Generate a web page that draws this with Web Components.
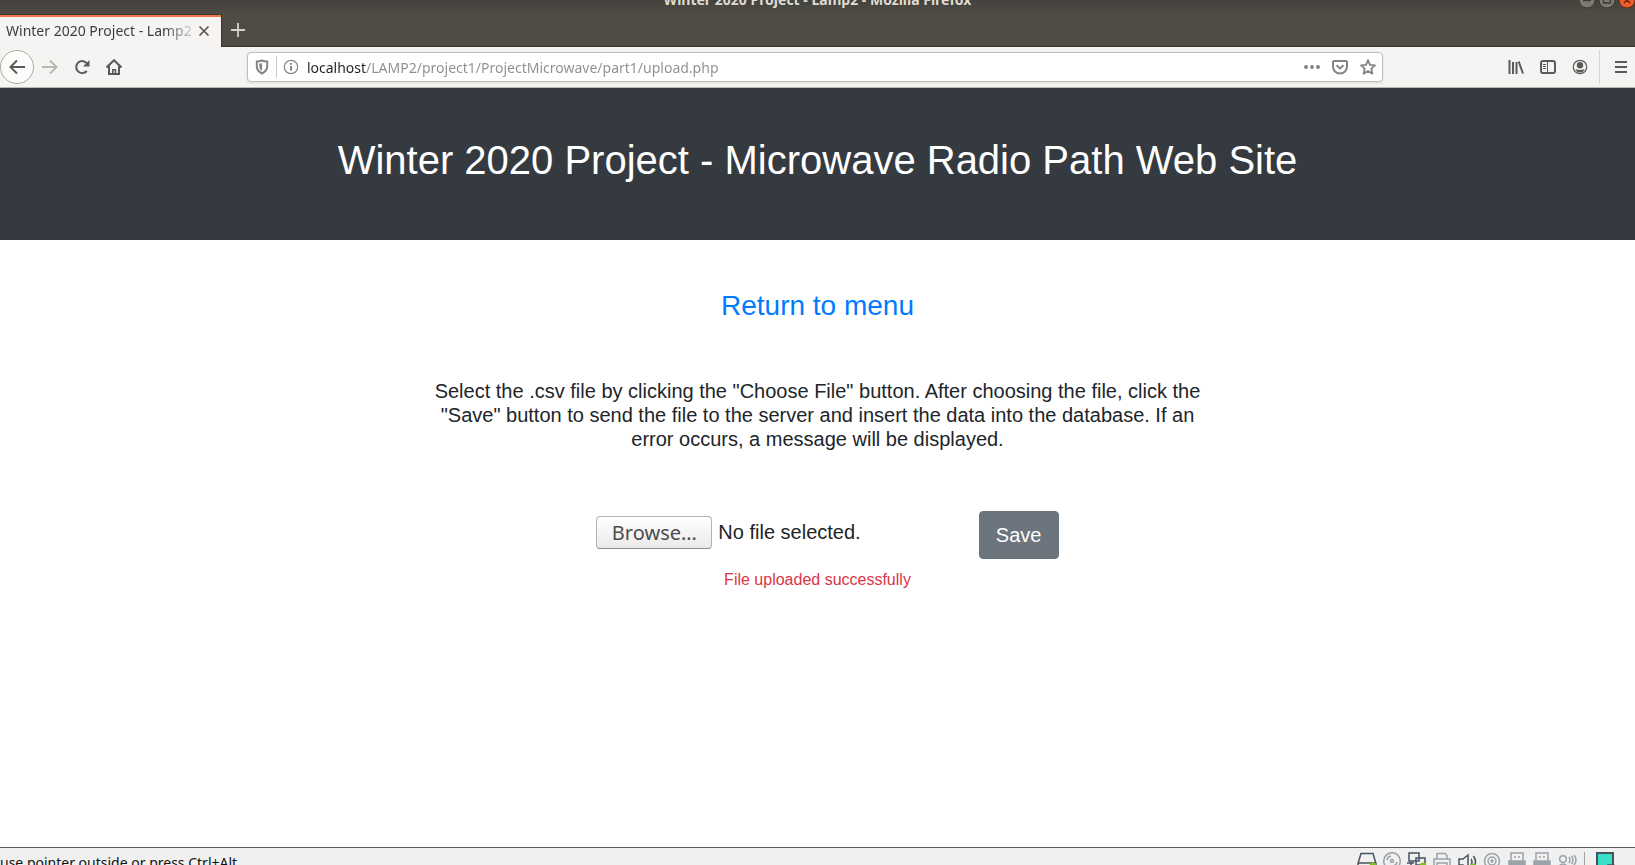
<!DOCTYPE html>
<html lang="en">
<head>
<meta charset="utf-8">
<title>Winter 2020 Project - Lamp2</title>
<style>
  html, body { margin: 0; height: 100%; }
  body {
    overflow: hidden;
    background: #fff;
    font-family: "Liberation Sans", Arial, sans-serif;
    --ui: "Noto Sans", "Open Sans", sans-serif;
  }
</style>
</head>
<body>
<app-shell>
  <window-title slot="chrome">Winter 2020 Project - Lamp2 - Mozilla Firefox</window-title>
  <tab-strip slot="chrome">Winter 2020 Project - Lamp2</tab-strip>
  <nav-toolbar slot="chrome" address="localhost/LAMP2/project1/ProjectMicrowave/part1/upload.php"></nav-toolbar>
  <site-header>Winter 2020 Project - Microwave Radio Path Web Site</site-header>
  <upload-page>
    <span slot="help">Select the .csv file by clicking the "Choose File" button. After choosing the file, click the "Save" button to send the file to the server and insert the data into the database. If an error occurs, a message will be displayed.</span>
    <span slot="message">File uploaded successfully</span>
  </upload-page>
  <vm-status slot="status">use pointer outside or press Ctrl+Alt</vm-status>
</app-shell>

<script>
const define = (name, html) => customElements.define(name, class extends HTMLElement {
  connectedCallback() {
    if (this.shadowRoot) return;
    this.attachShadow({ mode: "open" }).innerHTML = html;
    const address = this.shadowRoot.querySelector("#address");
    if (address) address.value = this.getAttribute("address");
  }
});

define("app-shell", `
<style>
  :host { display: flex; flex-direction: column; height: 100vh; }
  main { flex: 1; min-height: 0; overflow: hidden; background: #fff; }
</style>
<slot name="chrome"></slot>
<main><slot></slot></main>
<slot name="status"></slot>`);

define("window-title", `
<style>
  :host {
    display: grid; grid-template-columns: 1fr auto 1fr; align-items: end; align-content: end;
    height: 14px; flex: none; overflow: hidden;
    background: linear-gradient(#42413c, #504c45);
    color: #dfdbd2; font: bold 14px/20px var(--ui);
  }
  .title { grid-column: 2; white-space: nowrap; padding-bottom: 4px; }
  .controls { display: flex; justify-content: flex-end; gap: 2px; padding-bottom: 5px; margin-right: -1px; }
  button { border: 0; padding: 0; background: none; width: 18px; height: 18px; }
  svg { display: block; }
</style>
<span class="title"><slot></slot></span>
<div class="controls">
  <button aria-label="Minimize"><svg width="18" height="18"><circle cx="9" cy="9" r="8" fill="#7d7a72" stroke="#383630"/><path d="M5 9.500h8" stroke="#3c3a35" stroke-width="1.500"/></svg></button>
  <button aria-label="Maximize"><svg width="18" height="18"><circle cx="9" cy="9" r="8" fill="#7d7a72" stroke="#383630"/><path d="M5.500 6h7v6h-7z" fill="none" stroke="#3c3a35" stroke-width="1.300"/></svg></button>
  <button aria-label="Close window"><svg width="18" height="18"><circle cx="9" cy="9" r="8" fill="#f05a2a" stroke="#5a2a18"/><path d="M6 6l6 6M12 6l-6 6" stroke="#6b2a14" stroke-width="1.500"/></svg></button>
</div>`);

define("tab-strip", `
<style>
  :host { display: flex; flex: none; height: 33px; background: #504c45; box-shadow: inset 0 -1px #383630; }
  .tab {
    display: flex; align-items: center; box-sizing: border-box; width: 222px; height: 33px;
    border-top: 1px solid #383630; border-right: 1px solid #383630;
    background: linear-gradient(#f2784b 2px, #f5f4f2 2px); padding: 0 9px 0 6px; gap: 2px;
    color: #3d3d3d; font: 14px/20px var(--ui);
  }
  .label { flex: 1; overflow: hidden; white-space: nowrap; -webkit-mask-image: linear-gradient(90deg, #000 158px, transparent 192px); mask-image: linear-gradient(90deg, #000 158px, transparent 192px); }
  button { border: 0; padding: 0; background: none; display: grid; place-items: center; }
  .close { width: 16px; height: 20px; }
  .new { width: 32px; height: 32px; }
</style>
<div class="tab"><span class="label"><slot></slot></span>
  <button class="close" aria-label="Close tab"><svg width="12" height="12"><path d="M1.500 1.500l9 9M10.500 1.500l-9 9" stroke="#55524e" stroke-width="1.600"/></svg></button>
</div>
<button class="new" aria-label="New tab"><svg width="16" height="16"><path d="M8 1v14M1 8h14" stroke="#d6d2ca" stroke-width="1.800"/></svg></button>`);

define("nav-toolbar", `
<style>
  :host {
    display: flex; align-items: center; box-sizing: border-box; flex: none; height: 41px;
    background: #f5f4f2; border-bottom: 1px solid #b9b7b2; color: #5b5a58;
  }
  button { display: grid; place-items: center; box-sizing: border-box; width: 32px; height: 32px; padding: 0; border: 0; background: none; color: inherit; flex: none; }
  .back { width: 34px; height: 34px; border: 1px solid #adaba7; border-radius: 50%; background: #fcfcfb; }
  .off { color: #bab8b5; }
  .menu { width: 28px; }
  svg { display: block; fill: none; stroke: currentColor; stroke-width: 2; }
  .space { flex: 10; }
  .bar {
    display: flex; align-items: center; flex: 97; box-sizing: border-box; height: 30px;
    border: 1px solid #c0beba; border-radius: 4px; background: #fff; box-shadow: 0 1px 3px #0000001a; color: #858482;
  }
  .bar button { width: 28px; height: 28px; }
  .rule { width: 1px; height: 22px; background: #cccac6; }
  input {
    flex: 1; min-width: 0; height: 24px; border: 0; padding: 0 0 0 2px; outline: 0; font: 14px/20px var(--ui); color: #8b8b8b;
    background: linear-gradient(90deg, #222 61px, #8f8e8c 61px); -webkit-background-clip: text; background-clip: text;
    -webkit-text-fill-color: transparent;
  }
  .edge { width: 1px; height: 34px; background: #d6d4d0; margin: 0 7px 0 3px; }
</style>
<button class="back" aria-label="Back"><svg width="16" height="16"><path d="M16 8H2M8 1.500L1.500 8L8 14.500"/></svg></button>
<button class="off" aria-label="Forward"><svg width="16" height="16"><path d="M0 8h14M8 1.500L14.500 8L8 14.500"/></svg></button>
<button aria-label="Reload"><svg width="16" height="16"><path d="M12.800 12A6 6 0 1 1 13 4.500"/><path d="M15.500 1v6.500H9z" fill="currentColor" stroke="none"/></svg></button>
<button aria-label="Home"><svg width="16" height="16"><path d="M0.500 8.500L8 1.200L15.500 8.500M3 7v8h10V7"/><path d="M6.800 15v-4.200h2.700V15" stroke-width="1.600"/></svg></button>
<span class="space"></span>
<div class="bar">
  <button aria-label="Tracking protection"><svg width="16" height="16"><path d="M8 1.500C6 2.300 4.300 2.500 2.800 2.600V7c0 3.600 2 6 5.200 7.500C11.200 13 13.200 10.600 13.200 7V2.600C11.700 2.500 10 2.300 8 1.500z" stroke-width="2"/><path d="M8 4.200L5.300 4.800V7.500C5.500 9.500 6.400 11 8 12z" fill="currentColor" stroke="none"/></svg></button>
  <span class="rule"></span>
  <button aria-label="Site information"><svg width="16" height="16"><circle cx="8" cy="8" r="6.700" stroke-width="1.200"/><path d="M8 7v4.500M8 4v1.800"/></svg></button>
  <input id="address" aria-label="Address" spellcheck="false">
  <button aria-label="Page actions"><svg width="16" height="16"><g fill="currentColor" stroke="none"><circle cx="2" cy="8" r="2"/><circle cx="8" cy="8" r="2"/><circle cx="14" cy="8" r="2"/></g></svg></button>
  <button aria-label="Save to Pocket"><svg width="16" height="16"><path d="M2 2h12q1 0 1 1v4.500a7 7 0 0 1-14 0V3q0-1 1-1z"/><path d="M4.500 6.200L8 9.500L11.500 6.200"/></svg></button>
  <button aria-label="Bookmark"><svg width="16" height="16"><path d="M8 1.200L10 5.800L15 6.300L11.300 9.700L12.400 14.700L8 12.100L3.600 14.700L4.700 9.700L1 6.300L6 5.800z" stroke-width="1.800" stroke-linejoin="round"/></svg></button>
</div>
<span class="space"></span>
<button aria-label="Library"><svg width="16" height="16"><path d="M1.500 1v14M5 3v12M8.500 3v12M10.700 2.500L15 14.500"/></svg></button>
<button aria-label="Sidebars"><svg width="16" height="16"><rect x="1" y="2" width="14" height="12" rx="2"/><path d="M7.500 2v12M3 5.500h3M3 7.500h3M3 9.500h3" stroke-width="1"/></svg></button>
<button aria-label="Account"><svg width="16" height="16"><circle cx="8" cy="8" r="6.700" stroke-width="1.200"/><g fill="currentColor" stroke="none"><circle cx="8" cy="6.200" r="3.200"/><path d="M3.500 10q4.500 2 9 0Q11.500 13.500 8 13.500T3.500 10z"/></g></svg></button>
<span class="edge"></span>
<button class="menu" aria-label="Menu"><svg width="16" height="16"><path d="M2 3h12M2 8h12M2 13h12"/></svg></button>`);

define("site-header", `
<style>
  :host { display: block; padding: 48px 16px 56px; background: #343a40; color: #fff; text-align: center; }
  h1 { margin: 0; font-weight: 400; font-size: 40px; line-height: 48px; }
</style>
<h1><slot></slot></h1>`);

define("upload-page", `
<style>
  :host { display: flex; flex-direction: column; align-items: center; padding: 48px 16px; color: #212529; text-align: center; font-size: 20px; line-height: 24px; }
  h3 { margin: 0 0 55px; font-weight: 400; font-size: 28px; line-height: 36px; }
  a { color: #007bff; text-decoration: none; }
  .help { margin: 0 0 60px; max-width: 780px; }
  form { display: flex; align-items: center; gap: 118px; margin: 0 0 9px; padding-left: 20px; }
  .file { display: flex; align-items: center; gap: 6px; padding-bottom: 6px; }
  .file input { position: absolute; width: 1px; height: 1px; opacity: 0; }
  .browse {
    box-sizing: border-box; width: 116px; height: 33px; border: 1px solid #b5b3b0; border-bottom-color: #8f8d8a; border-radius: 4px;
    background: linear-gradient(#fff, #ebeae8); color: #4c4c4c; font: 20px/32px var(--ui);
  }
  button { min-width: 80px; border: 1px solid #6c757d; border-radius: 4px; padding: 8px 16px; background: #6c757d; color: #fff; font: 20px/30px "Liberation Sans", Arial, sans-serif; }
  .message { margin: 0; color: #dc3545; font-size: 16px; }
</style>
<h3><a href="#menu">Return to menu</a></h3>
<p class="help"><slot name="help"></slot></p>
<form onsubmit="return false">
  <label class="file" for="csv"><input id="csv" type="file" accept=".csv"><span class="browse">Browse…</span><span>No file selected.</span></label>
  <button type="submit">Save</button>
</form>
<p class="message" role="status"><slot name="message"></slot></p>`);

define("vm-status", `
<style>
  :host { display: flex; align-items: flex-start; box-sizing: border-box; flex: none; height: 18px; overflow: hidden; border-top: 1px solid #5e5e5e; background: #f0f0f0; color: #111; font: 14px/20px var(--ui); }
  .text { flex: 1; white-space: nowrap; padding-top: 5px; }
  .icons { display: flex; gap: 5px; padding: 4px 20px 0 0; }
  svg { display: block; width: 20px; height: 20px; fill: none; stroke: #9aa3aa; stroke-width: 1.500; }
  .on { stroke: #46535f; }
  .led { fill: #7fc31c; stroke: none; }
  .rule { width: 1px; height: 20px; margin: 0 5px 0 2px; background: #a0a0a0; }
</style>
<span class="text"><slot></slot></span>
<div class="icons">
  <svg class="on"><path d="M4 1.500h12l3 10v5H1v-5zM1 11h18"/><circle class="led" cx="16" cy="14" r="3.500"/></svg>
  <svg><circle cx="10" cy="9" r="8.300"/><circle cx="10" cy="9" r="1.500"/><path d="M5 8a5 5 0 0 1 4-4M15 10a5 5 0 0 1-4 4"/></svg>
  <svg class="on"><path d="M2 1h10v8H2zM9 6h9v7H9zM4 10v4h5M0 11h7" fill="#f0f0f0"/><circle class="led" cx="16" cy="14" r="3.500"/></svg>
  <svg><path d="M5 7V1.500h8l2 2V7M5 14H2V7h16v7h-3M5 11h10v6H5z"/></svg>
  <svg class="on"><path d="M2 7v6h4l5 4V3L6 7zM14 7q2 3 0 6M16.500 4q4 6 0 11"/><circle class="led" cx="16" cy="15" r="3.500"/></svg>
  <svg><circle cx="10" cy="9" r="7.500"/><circle cx="10" cy="9" r="4"/><circle cx="10" cy="9" r="1"/></svg>
  <svg><path d="M4 9V1h12v8M7 5h2M11 5h2"/><path d="M2 9h16v8H2z" fill="#9aa3aa"/></svg>
  <svg><path d="M4 9V1h12v8M7 5h2M11 5h2"/><path d="M2 9h16v8H2z" fill="#9aa3aa"/></svg>
  <svg><circle cx="6" cy="7" r="3.300"/><path d="M1 15q5-6 10 0M12 5q2 3 0 6M14.500 4q3 4 0 8M17 3q4 5 0 10"/></svg>
  <span class="rule"></span>
  <svg class="on"><path d="M2 1h16v17H2z" fill="#3adfca" stroke-width="2"/><path d="M13 18v-5h5z" fill="#46535f"/></svg>
</div>`);
</script>
</body>
</html>
